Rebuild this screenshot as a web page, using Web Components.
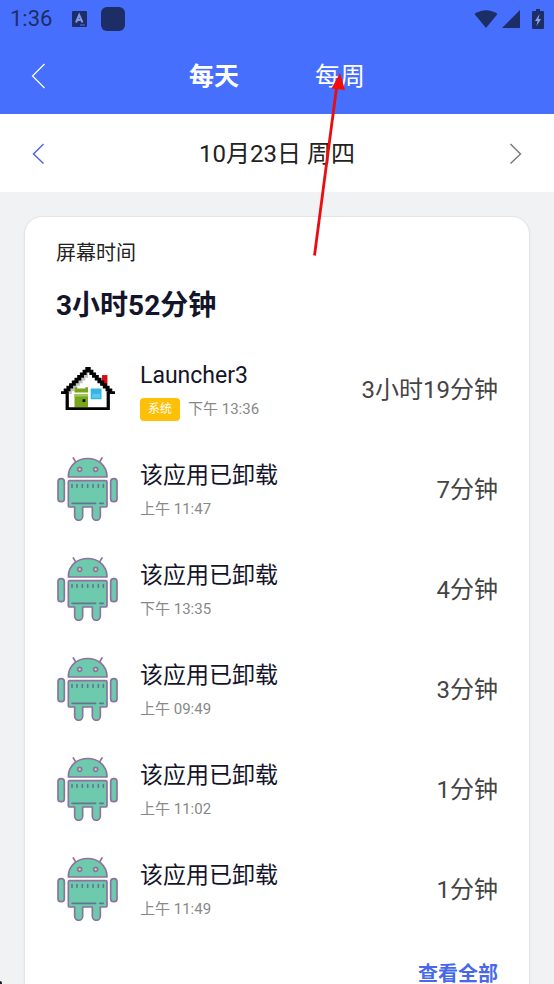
<!DOCTYPE html>
<html lang="zh-CN">
<head>
<meta charset="utf-8">
<meta name="viewport" content="width=device-width, initial-scale=1">
<title>屏幕时间</title>
<style>
    :root {
        --color-primary: #476ffe;
        --color-page: #f0f2f4;
        --color-ink: #14142a;
    }

    body {
        margin: 0;
        height: 100vh;
        overflow: hidden;
        background: var(--color-page);
        font-family: Roboto, "Noto Sans CJK SC", sans-serif;
    }
</style>
</head>
<body>
<screen-time-app></screen-time-app>

<script>
class BaseComponent extends HTMLElement {
    constructor() {
        super();
        const template = document.createElement('template');
        template.innerHTML = this.getTemplate();
        this.attachShadow({mode: 'open'}).appendChild(template.content.cloneNode(true));
    }

    getTemplate() {
        return '';
    }
}

class StatusBar extends BaseComponent {
    getTemplate() {
        return `
            <style>
                :host {
                    display: flex;
                    align-items: center;
                    height: 38px;
                    padding: 0 10px;
                    background: var(--color-primary);
                    color: #1d2d66;
                }
                time { font-size: 22px; line-height: 38px; margin-right: 20px; }
                svg { display: block; fill: currentColor; }
                .square { width: 24px; height: 24px; border-radius: 6px; background: currentColor; margin-left: 14px; }
                .signals { display: flex; align-items: center; gap: 4px; margin-left: auto; }
                .battery { margin-left: 8px; }
            </style>
            <time>1:36</time>
            <svg width="15" height="16" viewBox="0 0 15 16">
                <rect width="15" height="16" rx="1"/>
                <path d="M4 11.500 7.200 4 10.500 11.500M5 9H9.500" fill="none" stroke="#8297e6" stroke-width="2"/>
                <path d="M8 14H13" stroke="#5d74c8"/>
            </svg>
            <span class="square"></span>
            <div class="signals">
                <svg width="24" height="20" viewBox="0 0 24 20"><path d="M.5 5Q12-2.500 23.500 5L12 19Z"/></svg>
                <svg width="18" height="20" viewBox="0 0 18 20"><path d="M18 1V19H0Z"/></svg>
                <svg class="battery" width="12" height="20" viewBox="0 0 12 20">
                    <path d="M4 0H8V2H11Q12 2 12 3V19Q12 20 11 20H1Q0 20 0 19V3Q0 2 1 2H4Z"/>
                    <path d="M7.500 5 3 12H5.500L4.500 17 9 10H6.500Z" fill="#8b9ff0"/>
                </svg>
            </div>
        `;
    }
}

class PeriodTabs extends BaseComponent {
    getTemplate() {
        return `
            <style>
                :host {
                    display: grid;
                    grid-template-columns: 1fr auto 1fr;
                    align-items: center;
                    height: 76px;
                    padding: 0 28px;
                    background: var(--color-primary);
                    color: #fff;
                }
                button { padding: 0; border: 0; background: none; color: inherit; font: inherit; cursor: pointer; }
                nav { display: flex; gap: 76px; padding-top: 2px; }
                nav button { font-size: 25px; line-height: 36px; }
                .active { font-weight: 700; }
                .back { justify-self: start; }
                svg { display: block; fill: none; stroke: currentColor; }
            </style>
            <button class="back" aria-label="返回">
                <svg width="20" height="28" viewBox="0 0 20 28"><path d="M16.500 2 4.500 14 16.500 26" stroke-width="1.200"/></svg>
            </button>
            <nav>
                <button class="active">每天</button>
                <button>每周</button>
            </nav>
        `;
    }
}

class DatePicker extends BaseComponent {
    getTemplate() {
        return `
            <style>
                :host {
                    display: flex;
                    align-items: center;
                    justify-content: space-between;
                    height: 78px;
                    padding: 0 28px;
                    background: #fff;
                    color: #222;
                    font-size: 24px;
                    line-height: 36px;
                }
                .date { padding-top: 2px; }
                button { padding: 0; border: 0; background: none; cursor: pointer; }
                svg { display: block; fill: none; stroke-width: 1.400; }
            </style>
            <button aria-label="前一天">
                <svg width="20" height="24" viewBox="0 0 20 24" stroke="#4665e8"><path d="M15.500 3 5.500 13 15.500 22.500"/></svg>
            </button>
            <div class="date"><slot></slot></div>
            <button aria-label="后一天">
                <svg width="20" height="24" viewBox="0 0 20 24" stroke="#777"><path d="M4.500 3 14.500 13 4.500 22.500"/></svg>
            </button>
        `;
    }
}

class HouseIcon extends BaseComponent {
    getTemplate() {
        // roof is a staircase, one grid cell per step
        let roof = '';
        let shade = '';
        for (let i = 0; i < 10; i++) {
            const drop = i === 9 ? 1 : 2;
            const width = i === 0 ? 1 : 1.5;
            roof += `M${9 - i} ${i}h${width}v${drop}h-${width}z`;
            roof += `M${11 + i - width} ${i}h${width}v${drop}h-${width}z`;
            if (i < 7) {
                shade += `M${9 - i} ${i + 2}h1v2h-1z`;
            }
        }
        return `
            <style>
                :host { display: grid; justify-content: center; align-content: center; width: 64px; height: 62px; padding-bottom: 2px; box-sizing: content-box; }
                svg { display: block; }
            </style>
            <svg width="54" height="43" viewBox="0 0 20 16" preserveAspectRatio="none">
                <path d="M15.200 3h2v4h-2z" fill="#d80b12"/>
                <path d="M10 2 18 10V15H2V10Z" fill="#fff"/>
                <path d="${shade}" fill="#c4c4c4"/>
                <path d="M5 7.500h1v.5h3v-.5h1v2h-5zM5 10h5V15H5z" fill="#78a51b"/>
                <path d="M5 10h5v1H5z" fill="#a3c65b"/>
                <path d="M8 12h1v1h-1z"/>
                <path d="M11 8h4v4h-4z" fill="#35b5e5"/>
                <path d="M11.500 10h3v1.500h-3z" fill="#58c9ef"/>
                <path d="${roof}"/>
                <path d="M1.700 9h1.200v6h14V9h1.200v7H1.700z"/>
            </svg>
        `;
    }
}

class RobotIcon extends BaseComponent {
    getTemplate() {
        return `
            <style>
                :host { display: block; width: 64px; height: 64px; }
                svg { display: block; }
            </style>
            <svg width="64" height="64" viewBox="18 21 192 192" fill="#6dcaad" stroke="#8d719f" stroke-width="5" stroke-linecap="round" stroke-linejoin="round">
                <path d="M70 24 78 37M156 24 148 37" fill="none"/>
                <path d="M55 81C55 7 171 7 171 81Z"/>
                <circle cx="89" cy="58" r="6" fill="#dfd5bd"/>
                <circle cx="137" cy="58" r="6" fill="#dfd5bd"/>
                <rect x="24" y="86" width="19" height="69" rx="9"/>
                <rect x="182" y="86" width="19" height="69" rx="9"/>
                <path d="M59 92H167Q171 92 171 96V167Q171 171 167 171H151V199A12 12 0 0 1 127 199V171H98V199A12 12 0 0 1 74 199V171H59Q55 171 55 167V96Q55 92 59 92Z"/>
                <path d="M66 104V112M81 104V112M97 104V112M113 104V112M129 104V112M145 104V112M160 104V112" stroke="#64768c"/>
                <path d="M66 160H137M149 160H160" stroke="#64768c"/>
            </svg>
        `;
    }
}

class UsageRow extends BaseComponent {
    getTemplate() {
        return `
            <style>
                :host { display: flex; align-items: center; gap: 20px; height: 100px; }
                .info { flex: 1; min-width: 0; padding-top: 6px; }
                .name { color: var(--color-ink); font-size: 23px; line-height: 34px; }
                .meta { display: flex; align-items: center; gap: 8px; color: #888; font-size: 15px; line-height: 32px; }
                .total { padding-top: 2px; color: #444; font-size: 24px; line-height: 36px; }
                ::slotted([slot="badge"]) {
                    padding: 0 8px;
                    border-radius: 4px;
                    background: #fec006;
                    color: #fff;
                    font-size: 12px;
                    line-height: 23px;
                }
            </style>
            <slot name="icon"></slot>
            <div class="info">
                <div class="name"><slot></slot></div>
                <div class="meta"><slot name="badge"></slot><slot name="time"></slot></div>
            </div>
            <div class="total"><slot name="total"></slot></div>
        `;
    }
}

class UsageCard extends BaseComponent {
    getTemplate() {
        return `
            <style>
                :host {
                    display: block;
                    margin: 24px 24px 0;
                    padding: 20px 31px;
                    border: 1px solid #e2e4e7;
                    border-radius: 18px;
                    background: #fff;
                    box-shadow: 0 1px 3px #0000000d;
                }
                h2 { margin: 0; color: #222; font-size: 20px; font-weight: 400; line-height: 32px; }
                .sum { margin: 0; padding-top: 4px; color: var(--color-ink); font-size: 28px; font-weight: 700; line-height: 66px; }
                footer { text-align: right; }
                a { color: #4868ea; font-size: 20px; font-weight: 700; line-height: 70px; text-decoration: none; }
            </style>
            <h2>屏幕时间</h2>
            <p class="sum">3小时52分钟</p>
            <slot></slot>
            <footer><a href="#all">查看全部</a></footer>
        `;
    }
}

class PointerArrow extends BaseComponent {
    getTemplate() {
        return `
            <style>
                :host { position: absolute; top: 70px; left: 50%; pointer-events: none; }
                svg { display: block; }
            </style>
            <svg width="80" height="190" viewBox="0 0 80 190" fill="#f00c0f">
                <path d="M37.500 185.500 59.500 18" stroke="#e90d0f" stroke-width="2.800"/>
                <path d="M63 3 68 20 54.500 18.500Z"/>
            </svg>
        `;
    }
}

class ScreenTimeApp extends BaseComponent {
    getTemplate() {
        const removed = [
            ['上午 11:47', '7分钟'],
            ['下午 13:35', '4分钟'],
            ['上午 09:49', '3分钟'],
            ['上午 11:02', '1分钟'],
            ['上午 11:49', '1分钟'],
        ];
        const rows = removed.map(([time, total]) => `
            <usage-row>
                <robot-icon slot="icon"></robot-icon>该应用已卸载
                <span slot="time">${time}</span>
                <span slot="total">${total}</span>
            </usage-row>
        `).join('');

        return `
            <style>
                :host { display: block; position: relative; }
                .corner {
                    position: fixed;
                    left: 0;
                    bottom: 0;
                    width: 2px;
                    height: 3px;
                    background: #10232f;
                    border-top-right-radius: 2px;
                }
            </style>
            <status-bar></status-bar>
            <period-tabs></period-tabs>
            <date-picker>10月23日 周四</date-picker>
            <usage-card>
                <usage-row>
                    <house-icon slot="icon"></house-icon>Launcher3
                    <span slot="badge">系统</span>
                    <span slot="time">下午 13:36</span>
                    <span slot="total">3小时19分钟</span>
                </usage-row>
                ${rows}
            </usage-card>
            <pointer-arrow></pointer-arrow>
            <span class="corner"></span>
        `;
    }
}

customElements.define('status-bar', StatusBar);
customElements.define('period-tabs', PeriodTabs);
customElements.define('date-picker', DatePicker);
customElements.define('house-icon', HouseIcon);
customElements.define('robot-icon', RobotIcon);
customElements.define('usage-row', UsageRow);
customElements.define('usage-card', UsageCard);
customElements.define('pointer-arrow', PointerArrow);
customElements.define('screen-time-app', ScreenTimeApp);
</script>
</body>
</html>
